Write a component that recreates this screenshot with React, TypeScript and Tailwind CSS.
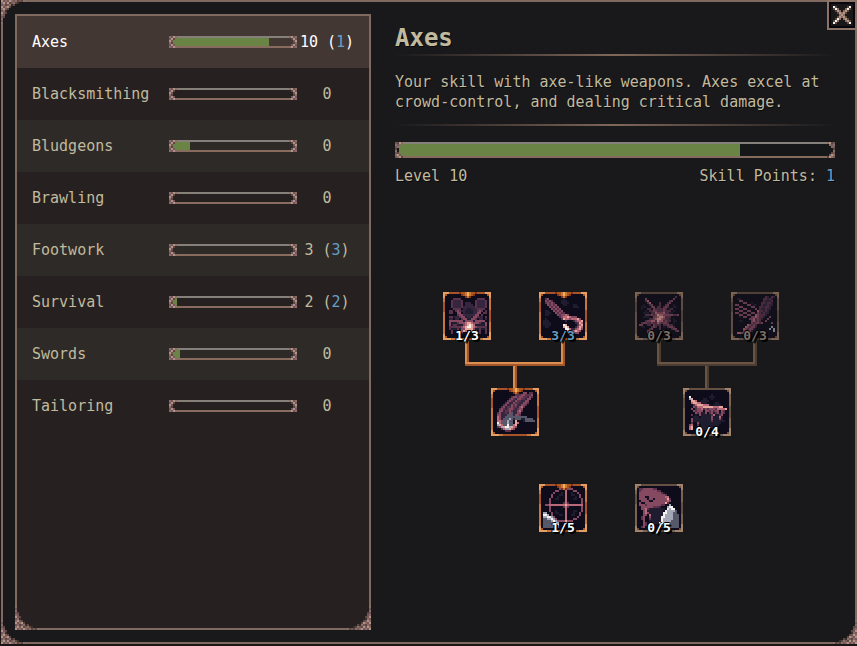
import clsx from 'clsx';

// ─── Pixel art ────────────────────────────────────────────────────
const palette: Record<string, string> = {
  a: '#1f1c2f',
  b: '#35253f',
  c: '#5b324b',
  d: '#854961',
  e: '#b8697a',
  f: '#e8a79b',
  g: '#565869',
  h: '#a3a6b6',
  k: '#15101f',
  w: '#f4f1ee',
  // metal
  m: '#8b6f62',
  n: '#5d4840',
  p: '#b39485',
  q: '#745660',
  r: '#3c302d',
  o: '#c6763f',
  s: '#e3a062',
  t: '#7d3516',
  u: '#b0521c',
  y: '#f2b04d',
};

function Sprite({ rows, x = 0, y = 0 }: { rows: string[]; x?: number; y?: number }) {
  return (
    <g shapeRendering="crispEdges">
      {rows.flatMap((row, ry) =>
        [...row].map((ch, rx) =>
          palette[ch] ? (
            <rect key={`${rx}-${ry}`} x={x + rx} y={y + ry} width={1} height={1} fill={palette[ch]} />
          ) : null
        )
      )}
    </g>
  );
}

const art = {
  cleave: [
    '....................',
    '...cccc........cccc.',
    '..cbbbbc......cbbbbc',
    '..cbbbbc.bbb..cbbbbc',
    '..cbbbbc.bbbb.cbbbbc',
    '..cbbbbcbbbbbbcbbbbc',
    '...cccc.bbaabbbcccc.',
    '.cc.cdcbbaaaabbcdc.c',
    '.cc..dd.baaaabbdd.cc',
    '.....cddbbbbbbdd.c..',
    '.ccabbcddabbaddcbb.c',
    '.bb.bb.cddaaddc.bb.b',
    '.dddddddaddddaddddd.',
    '.daaacdddeffedddcaad',
    '.daccaaadefwfeaaaaad',
    '.ccccccdefwwfedccccc',
    '.caaacaddffffdaacaac',
    '..c..c.dfe..efd.c..c',
    '..c..c.d.....d..c..c',
    '....................',
  ],
  hook: [
    '....................',
    '.cd.......a.........',
    '.dcdc....aaa........',
    '.cdcdc...aaaa.......',
    '..dcdcd...aa...aa...',
    '...dcdcd.......aaa..',
    '....dcdcd...........',
    '.aa..dcdcd..........',
    '.aaa..dcdcc.........',
    '.aa....dcdded.......',
    '........cdeefeddd...',
    '.a.......cfeedeeefd.',
    'aaa........b...bdeef',
    'aaaa............bcfe',
    'aaaa......wf.....cef',
    '.aa.......fwf...bdfe',
    '...........wwebbdefd',
    '............fffefed.',
    '............deeedd..',
    '....................',
  ],
  blade: [
    '..............dd.cc.',
    '..........cccddcccd.',
    '........cddcddccbdc.',
    '.......cdcbddccbdd..',
    '......cdcbdccbbdd...',
    '.....cdbbdccbbddc...',
    '....cdbbdcdbbddc....',
    '...cdbccdccbdec.....',
    '..cdcbcddcbcdd......',
    '..ddbccdcbbdec......',
    '.cdbbcbdgbbdd.......',
    '.ddbbbgggbddc.......',
    '.edbbggggggggggg....',
    '.edbggghgbgggaagggg.',
    '.eedgghgg.f...aggggg',
    '.weggghgg.fe........',
    '.hfeggwggef.........',
    '.cdhfwwhfed.........',
    '...cehhfed..........',
    '.....ccc............',
  ],
  burst: [
    '..................c.',
    '...d.............d..',
    '...ce..........cd...',
    '....ce....c...cd....',
    '..a..cd...c..cd..a..',
    '.aaa..dd.cc.cdc..aa.',
    '.a..cc.dccccdc.bc...',
    '...a.ccddcccdccc.a..',
    '..aaa.ccedddeccaa...',
    '...cccdcdfeedddddccd',
    '..aaa..ddeffeccc....',
    '.....ccdeffedccb.a..',
    '...cddeecfeecdcc.aa.',
    '.cddccdccedcddc..a..',
    'dd..cc.dccc.ccdcc...',
    '.aa...cdc.c.a.cddc..',
    '.....cd...c.....cdd.',
    '....df......c.....cd',
    '....d...............',
    '....................',
  ],
  slashes: [
    '...............cb.cb',
    '.aa...........ccbcb.',
    '..dd..........cbbbc.',
    '....dd..a....ccbccb.',
    'dd....dd.aa..cbbcbb.',
    '..dd....dd..ccbccb..',
    'dd..dd....d.cbbcbb..',
    '..dd..dd...eccbcb...',
    'dd..dd..dd.dcbcbb...',
    '..dd..dd..edcccb....',
    '..a.dd..ddedccb..d..',
    '.......ddecdcb..d...',
    '..aa....decdc..d....',
    '........dcddcd....d.',
    '......edcdc.........',
    '.....edcddb.......h.',
    '....edcddb.......h.h',
    '....dcddb..........h',
    '.eedddc.............',
    '....................',
  ],
  maul: [
    '....................',
    '............a.......',
    '.w.........aaa......',
    '.hf.....aa..a.......',
    '..ffe..aaaa.........',
    '..effeeaaa....aa....',
    '...cefffeeea.aaaa...',
    '...dceeefffffeeeff..',
    '..d.cddecdcdddceeeef',
    '...dcddd.ddcdcdd.dc.',
    '....dcdaad.cdacdadc.',
    '..c.a.daaaaaceaacd..',
    '...aaa.aaaaadaaaea..',
    '..daaaaaaaaadaaada..',
    '..daaaaaaaaacaaaaaa.',
    '..c..daaaaaaaaaaa...',
    '.de..c.aaaaaaaaa....',
    '.ef....aaaaaa.......',
    '.ef.....aa..........',
    '....................',
  ],
  crosshair: [
    '........dddfddd.....',
    '......dd...e...dd...',
    '.....d...a.e..a..d..',
    '....d...aa.e..aa..d.',
    '....d..a...e....a.d.',
    '...d..aa...e...aa..d',
    '...d.......e.......d',
    '...d......cec......d',
    '.ddeeeeeeeefeeeeeeee',
    '...d......cec......d',
    '...d.......e.......d',
    '...d..a....e...aa..d',
    'hh..d.aa...e...a..d.',
    'wwh.d...aa.e..aa..d.',
    'hhwwhd.....e.....d..',
    'gghhwhd....e...dd...',
    'gggghwhddddfddd.....',
    'ggggghwh...d........',
    'gggggghw............',
    'gggggghh............',
  ],
  ghoul: [
    'ccdddddcc...........',
    'cddddddddcc.........',
    'dddddddddddca.......',
    'dddddddddddddc......',
    'dddkkddddddddee.....',
    'ddddkddkddddddfc....',
    'kddddkkddddddded....',
    'dkkddddddddddfc.....',
    'dddcdddddddcc..h....',
    '.ddddddcccb...hww...',
    '.ddecaaaaaaaa.whww..',
    '..deaaaaaaaa.whhhhg.',
    '..dedaaaaaaawwhhhgg.',
    '..dd.eaaaaaawhhhhggg',
    '.cd..daaaaawwhhhhggg',
    '.cd..caaaaawhhhhhggg',
    '..d..aaaaaawhhhhgggg',
    '..dc..aaaawwhhhggggg',
    '..dc......wwhhgggggg',
    '.cd.......whhhgggggg',
  ],
};

const cornerArt = [
  'm...........',
  'q...........',
  'm...........',
  'qn..........',
  'mq..........',
  'pqn.........',
  'qmr.........',
  'mpqn........',
  'pqmpn.......',
  'qmnqmrn.....',
  'mpqpnqmnr...',
  'pqmqpmqmnqnm',
];

const smallCap = ['mqpm', 'qpn.', 'pq..', 'mn..', 'qpq.', 'mqpm'];
const largeCap = ['qnpm', 'mqm.', 'qm..', 'n...', 'm...', 'qn..', 'mpq.', 'qmpn'];

const crossArt = [
  'wn.....nw',
  'nwm...mwn',
  '.npm.mpn.',
  '..npmpn..',
  '...mpm...',
  '..npmpn..',
  '.nwm.mpn.',
  'nwm...mpn',
  'wn.....nw',
];

function Corner({ className }: { className: string }) {
  return (
    <svg viewBox="0 0 12 12" className={clsx('pointer-events-none absolute h-6 w-6', className)} aria-hidden="true">
      <Sprite rows={cornerArt} />
    </svg>
  );
}

// ─── Data ─────────────────────────────────────────────────────────
interface Skill {
  name: string;
  level: number;
  points: number;
  progress: number;
}

const skills: Skill[] = [
  { name: 'Axes', level: 10, points: 1, progress: 80 },
  { name: 'Blacksmithing', level: 0, points: 0, progress: 0 },
  { name: 'Bludgeons', level: 0, points: 0, progress: 14 },
  { name: 'Brawling', level: 0, points: 0, progress: 0 },
  { name: 'Footwork', level: 3, points: 3, progress: 0 },
  { name: 'Survival', level: 2, points: 2, progress: 3 },
  { name: 'Swords', level: 0, points: 0, progress: 6 },
  { name: 'Tailoring', level: 0, points: 0, progress: 0 },
];

type PerkState = 'owned' | 'open' | 'locked';

interface Perk {
  id: keyof typeof art;
  state: PerkState;
  rank?: string;
  maxed?: boolean;
}

const trees: { parents: Perk[]; child: Perk; lit: boolean }[] = [
  {
    parents: [
      { id: 'cleave', state: 'owned', rank: '1/3' },
      { id: 'hook', state: 'owned', rank: '3/3', maxed: true },
    ],
    child: { id: 'blade', state: 'owned' },
    lit: true,
  },
  {
    parents: [
      { id: 'burst', state: 'locked', rank: '0/3' },
      { id: 'slashes', state: 'locked', rank: '0/3' },
    ],
    child: { id: 'maul', state: 'open', rank: '0/4' },
    lit: false,
  },
];

const singles: Perk[] = [
  { id: 'crosshair', state: 'owned', rank: '1/5' },
  { id: 'ghoul', state: 'open', rank: '0/5' },
];

// ─── Parts ────────────────────────────────────────────────────────
function Bar({ value, label, large }: { value: number; label: string; large?: boolean }) {
  const cap = large ? largeCap : smallCap;
  const capClass = clsx('absolute top-0 w-2', large ? 'h-4' : 'h-3');
  return (
    <div
      role="progressbar"
      aria-label={label}
      aria-valuenow={value}
      className={clsx(
        'relative w-full border-y-2 border-t-[#858079] border-b-[#876b5f]',
        large ? 'h-4 bg-[#151719]' : 'h-3'
      )}
    >
      <div className="mx-1 h-full">
        <div className="h-full bg-[#6a8445]" style={{ width: `${value}%` }} />
      </div>
      <div className="absolute -inset-y-0.5 inset-x-0">
        <svg viewBox={`0 0 4 ${cap.length}`} className={clsx(capClass, 'left-0')} aria-hidden="true">
          <Sprite rows={cap} />
        </svg>
        <svg viewBox={`0 0 4 ${cap.length}`} className={clsx(capClass, 'right-0 -scale-x-100')} aria-hidden="true">
          <Sprite rows={cap} />
        </svg>
      </div>
    </div>
  );
}

function PerkFrame({ owned }: { owned: boolean }) {
  const edge = owned ? '#a9532a' : '#655044';
  const side = owned ? '#c6763f' : '#7b6354';
  const bright = owned ? '#e3a062' : '#a5826a';
  return (
    <g shapeRendering="crispEdges">
      <rect width={24} height={24} fill={side} />
      <rect x={3} width={18} height={1} fill={edge} />
      <rect x={6} y={23} width={12} height={1} fill={edge} />
      <rect y={5} width={1} height={5} fill={edge} />
      <rect x={23} y={9} width={1} height={6} fill={edge} />
      <rect x={1} y={1} width={22} height={22} fill="#0e0b1a" />
      <path
        d="M0 0h3v1H1v2H0zM21 0h3v3h-1V1h-2zM0 21h1v2h3v1H0zM23 20h1v4h-4v-1h3z"
        fill={bright}
      />
      <path d="M1 1h1v1H1zM22 1h1v1h-1zM1 22h1v1H1zM22 22h1v1h-1z" fill={edge} />
    </g>
  );
}

const notch = ['tuuoyouut', '.tuoyout.', '...tot...'];

function PerkButton({ perk }: { perk: Perk }) {
  const locked = perk.state === 'locked';
  return (
    <button type="button" aria-label={perk.id} className="relative block h-12 w-12 shrink-0">
      <svg viewBox="0 0 24 24" className={clsx('h-12 w-12', locked && 'opacity-70')} aria-hidden="true">
        <PerkFrame owned={perk.state === 'owned'} />
        <Sprite rows={art[perk.id]} x={2} y={2} />
        {perk.state === 'owned' && <Sprite rows={notch} x={8} />}
      </svg>
      {perk.rank && (
        <span
          className={clsx(
            'absolute inset-x-0 -bottom-1 z-10 text-center text-[13px] font-bold leading-4 [text-shadow:1px_1px_0_#000,-1px_0_0_#000,0_-1px_0_#000,2px_2px_0_#000]',
            locked ? 'text-[#7c7069]' : perk.maxed ? 'text-[#639cc3]' : 'text-white'
          )}
        >
          {perk.rank}
        </span>
      )}
    </button>
  );
}

// Joins the two parents above to the single child below.
function Connector({ lit }: { lit: boolean }) {
  const light = lit ? '#dc8e50' : '#6a5545';
  const dark = lit ? '#a1552b' : '#4b3d33';
  return (
    <svg viewBox="0 0 144 48" className="block h-12 w-36" shapeRendering="crispEdges" aria-hidden="true">
      <path d="M22 0h4v26h-4zM118 0h4v26h-4zM70 24h4v24h-4zM22 22h100v4H22z" fill={dark} />
      <path d="M22 0h2v24h-2zM118 0h2v22h-2zM70 26h2v22h-2zM22 22h98v2H22z" fill={light} />
    </svg>
  );
}

function SkillRow({ skill, active }: { skill: Skill; active: boolean }) {
  return (
    <li className={active ? 'bg-[#433734]' : 'even:bg-[#262120] odd:bg-[#2e2a27]'}>
      <button
        type="button"
        aria-current={active}
        className={clsx(
          'grid h-13 w-full grid-cols-[1fr_128px_60px] items-center pl-[15px] pr-3 text-left',
          active && 'text-white'
        )}
      >
        <span>{skill.name}</span>
        <Bar value={skill.progress} label={`${skill.name} progress`} />
        <span className="whitespace-pre text-center">
          {skill.level}
          {skill.points > 0 && (
            <>
              {' ('}
              <span className="text-[#659fc8]">{skill.points}</span>)
            </>
          )}
        </span>
      </button>
    </li>
  );
}

function Divider({ className }: { className?: string }) {
  return (
    <hr
      className={clsx('h-0.5 border-0 bg-linear-to-r from-transparent via-[#80675a] to-transparent', className)}
    />
  );
}

export default function App() {
  const current = skills[0];

  return (
    <div className="flex min-h-screen bg-[#1b1516] pb-0.5 pl-px font-['DejaVu_Sans_Mono',monospace] text-[15px] leading-5 text-[#c1ba9e] [text-shadow:1px_1px_0_#0b0a0a]">
      <div className="relative flex flex-1 border-2 border-[#80695f] bg-[#19191b] py-3 pl-3">
        <Corner className="-bottom-0.5 -left-0.5" />
        <Corner className="-bottom-0.5 -right-0.5 -scale-x-100" />
        <Corner className="-left-0.5 -top-0.5 -scale-y-100" />

        {/* Skill list */}
        <nav aria-label="Skills" className="relative w-[356px] shrink-0 border-2 border-[#80695f] bg-[#262120]">
          <ul>
            {skills.map((skill) => (
              <SkillRow key={skill.name} skill={skill} active={skill === current} />
            ))}
          </ul>
          <Corner className="-bottom-0.5 -left-0.5" />
          <Corner className="-bottom-0.5 -right-0.5 -scale-x-100" />
        </nav>

        {/* Detail pane */}
        <main className="min-w-0 flex-1 pl-6 pr-5 pt-2">
          <h1 className="text-2xl font-bold leading-8">{current.name}</h1>
          <Divider />
          <p className="mt-4">
            Your skill with axe-like weapons. Axes excel at crowd-control, and dealing critical damage.
          </p>
          <Divider className="mt-3 mb-4" />
          <Bar value={79} label="Level progress" large />
          <div className="mt-2 flex justify-between">
            <span>Level {current.level}</span>
            <span>
              Skill Points: <span className="text-[#659fc8]">{current.points}</span>
            </span>
          </div>

          {/* Perk trees */}
          <div className="mt-[106px] flex flex-col items-center gap-12 pr-2">
            <div className="flex gap-12">
              {trees.map((tree) => (
                <div key={tree.child.id} className="flex flex-col items-center">
                  <div className="flex gap-12">
                    {tree.parents.map((perk) => (
                      <PerkButton key={perk.id} perk={perk} />
                    ))}
                  </div>
                  <Connector lit={tree.lit} />
                  <PerkButton perk={tree.child} />
                </div>
              ))}
            </div>
            <div className="flex gap-12">
              {singles.map((perk) => (
                <PerkButton key={perk.id} perk={perk} />
              ))}
            </div>
          </div>
        </main>

        {/* Close */}
        <button
          type="button"
          aria-label="Close"
          className="absolute -right-0.5 -top-0.5 flex h-[30px] w-[30px] items-center justify-center border-2 border-[#8d7365] bg-[#1a1718] outline-2 -outline-offset-4 outline-[#08050d]"
        >
          <svg viewBox="0 0 9 9" className="h-[18px] w-[18px]" aria-hidden="true">
            <Sprite rows={crossArt} />
          </svg>
        </button>
      </div>
    </div>
  );
}
